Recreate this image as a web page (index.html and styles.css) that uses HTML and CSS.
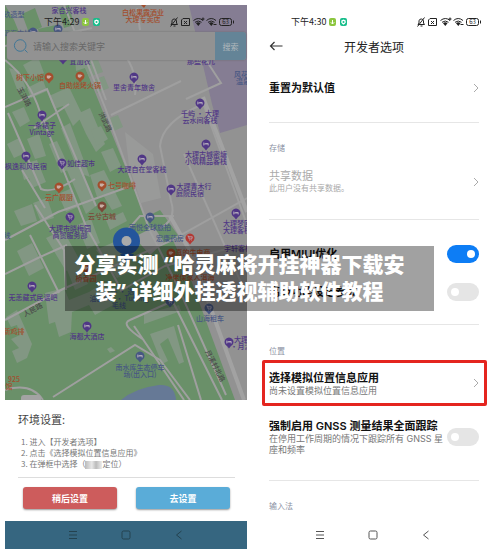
FILE: index.html
```html
<!DOCTYPE html>
<html lang="zh-CN">
<head>
<meta charset="utf-8">
<meta name="viewport" content="width=device-width, initial-scale=1">
<title>开发者选项</title>
<link rel="stylesheet" href="styles.css">
</head>
<body>
<svg class="defs" aria-hidden="true">
  <symbol id="status" viewBox="0 0 66 12">
    <g fill="none" stroke="currentColor" stroke-width="1">
      <path d="M2 8.500h6.500L7.500 7V4.800a2.300 2.300 0 0 0-4.500 0V7zM4.500 10h2M8.500 1.500L1.500 10.500"/>
      <path d="M14 2.500h6.500v7h-8V4zM15 5l3 3M18 5l-3 3"/>
      <path d="M24.500 4.500q5-4 9.500 0M26 6.300q3.300-2.600 6.500 0M34 1.500v3M32.500 3h3"/>
      <path d="M37.500 4.500q4.700-4 9.500 0M39 6.300q3.200-2.600 6.500 0M44.500 8.500h3"/>
      <rect x="50.500" y="2.500" width="12" height="7" rx="2"/>
      <path d="M64.500 4.500v3"/>
    </g>
    <path d="M27 7.200q2.200-1.800 4.500 0L29.300 10zM40 7.200q2.200-1.800 4.500 0L42.300 10z" fill="currentColor"/>
    <text x="56.500" y="8.200" font-size="6" text-anchor="middle" fill="currentColor">63</text>
  </symbol>
  <symbol id="badges" viewBox="0 0 19 8">
    <rect width="7" height="8" rx="2" fill="#8cc63f"/>
    <path d="M3.500 2v4M1.800 4.300l1.700 1.700 1.700-1.700" fill="none" stroke="#fff"/>
    <rect x="11" width="7" height="8" rx="2" fill="#17bd8b"/>
    <path d="M14.500 1.500l2.200 1v2q-.5 1.600-2.200 2.200-1.700-.6-2.200-2.200v-2z" fill="#fff"/>
    <circle cx="14.500" cy="4" r="1" fill="#17bd8b"/>
  </symbol>
  <symbol id="menu" viewBox="0 0 10 10"><path d="M1 1.500h8M1 5h8M1 8.500h8" fill="none" stroke="currentColor"/></symbol>
  <symbol id="home" viewBox="0 0 10 10"><rect x="1" y="1" width="8" height="8" rx="1.500" fill="none" stroke="currentColor"/></symbol>
  <symbol id="back" viewBox="0 0 10 10"><path d="M7.500 1L2.500 5l5 4" fill="none" stroke="currentColor"/></symbol>
  <symbol id="next" viewBox="0 0 6 10"><path d="M1 1l4 4-4 4" fill="none" stroke="currentColor"/></symbol>
  <symbol id="pin" viewBox="-5 -5 10 12" overflow="visible">
    <path d="M0 6.500L-2 4A4.500 4.500 0 1 1 2 4z" fill="currentColor"/>
    <path d="M-2.200 1.500v-3M-2.200 0h4.400M2.200 1.500v-2h-3" fill="none" stroke="#b5aebc" stroke-width=".9"/>
  </symbol>
  <symbol id="cart" viewBox="-5 -5 10 12" overflow="visible">
    <path d="M0 6.500L-2 4A4.500 4.500 0 1 1 2 4z" fill="currentColor"/>
    <path d="M-2.500-2h1l.7 3h2.500l.6-2.200h-3.500M-.6 2.200h.6M1.300 2.200h.6" fill="none" stroke="#b5aebc" stroke-width=".8"/>
  </symbol>
  <symbol id="cup" viewBox="-5 -5 10 12" overflow="visible">
    <path d="M0 6.500L-2 4A4.500 4.500 0 1 1 2 4z" fill="currentColor"/>
    <path d="M-2.200-1.500h3.400v2.200q-1.700 2-3.400 0zM1.200-1h1v1.300h-1" fill="#c9aea3"/>
  </symbol>
</svg>

<main class="screens">
  <section class="phone phone-map">
    <div class="map-stack">
      <svg class="map" viewBox="5 5 242 395" preserveAspectRatio="xMidYMin slice" role="img" aria-label="地图">
        <rect x="5" y="5" width="242" height="395" fill="#929292"/>
        <path d="M189 5h58v120l-27 8-8-29z" fill="#857d93"/>
        <path d="M5 5h67l8 50 72 178 14-8 25 55 44 120H5z" fill="#6a9069"/>
        <path d="M5 5h70l8 25-60 12-9-22z" fill="#8e9390"/>
        <path d="M22 14l13-6 7 19-13 6zM38 29l18-4 4 10-19 6zM58 8l11-3 5 20-10 3z" fill="#6a9069"/>
        <path d="M132 224l28-14 20 28-33 10z" fill="#6a9069"/>
        <g fill="#829783">
          <path d="M23 65l15-8 6 16-13 6zM9 68l9 24 8-4-7-17zM27 88l16-8 4 11-16 7zM49 96l20-9 14 29-10 10-10-20-9 3zM75 58l20-6 8 20-14 5-4-9-9 3zM93 80l11-4 5 12-12 5zM77 114l13-6 15 36-9 8-10-18zM61 128l9-5 20 54-11-4z"/>
          <path d="M12 112l12-5 6 14-10 6zM7 144l12-6 6 15-11 5zM27 139l12-5 7 22-11 3zM49 144l8-3 13 28-9 4zM20 165l17-5 9 22-14 6-3-10-5 2zM66 168l14-2 16 40-10 8zM90 175l14-5 18 36-10 4-9-15-6 2zM101 152l12-4 8 18-11 6zM110 118l8-3 5 12-9 4zM91 130l10-4 7 13-11 7z"/>
          <path d="M33 203l14-5 7 20-13 4zM58 194l12-5 8 18-12 5zM14 211l18-7 5 17-16 5zM77 225l14-6 9 24-13 6zM106 220l17-8 4 9-17 9zM17 251l15-8 12 25-15 8zM46 238l17-8 19 34-16 7zM67 270l13-6 8 20-13 6zM96 250l18-8 20 28-17 8z"/>
          <path d="M45 293l19-5 5 12 20-8 14-9 10 22-18 10-6-10-17 7-1 20-12 5-4-15-6 2zM11 339l9-4-3-10-6 2-5-10 11-7 15 34-5 14-10 5-5-12 7-3zM150 334l24-8 10 36-5 2-11-26-8 6 8 17-6 3zM107 349l4-2 4 4-5 2zM144 314l35-9 2 6-37 13z"/>
        </g>
        <path d="M134 237l20-10 10 15-14 13zM125 132l28 22 8 44-20 5-12-37z" fill="#999a99"/>
        <path d="M121 400q14-12 38-15 16-1 17 15z" fill="#667996"/>
        <g class="road">
          <path d="M5 46L92 28M5 60q25 20 35 52l46 114 36 65M5 107l42-18 49 117M8 113l33 76q12 5 34-10M22 170l23 38M34 128l35-24M5 240l53-28 70-25"/>
          <path d="M64 5l42 105 44 121 28 56 48 108M80 30l26 70M111 115l70-34M120 291l45-25 65-18M5 320l58-31 107-48 77-43M53 397l82-52 25 15 30 40"/>
          <path d="M5 274l35-17 27-12M30 235l29 58M35 205l29 45 2 40M144 340q-25-16-14-20l45-20M134 326l50 74M178 325l23 75M172 300l50 100"/>
          <path d="M120 50q18 18 15 45M201 105q-39 17-41 41l11 55q6 19-11 27M203 103l43 119M184 154l63 142M5 390q26-8 38 10M137 8l3 22M193 40l28 43-35 16M174 216h-34l-15 17"/>
        </g>
        <path d="M170 216l20 35 54 149M203 97l44 115" fill="none" stroke="#a2a2a2" stroke-width="4"/>
        <path d="M21 400v-2q0-3 3-3h14q3 0 3 3v2z" fill="#a3a3a3"/>

        <g class="poi purple">
          <use href="#pin" x="37" y="110" width="10" height="12"/><use href="#pin" x="21" y="151" width="10" height="12"/>
          <use href="#cart" x="57" y="158" width="10" height="12"/><use href="#cart" x="65" y="212" width="10" height="12"/>
          <use href="#pin" x="129" y="72" width="10" height="12"/><use href="#pin" x="195" y="98" width="10" height="12"/>
          <use href="#pin" x="201" y="139" width="10" height="12"/><use href="#pin" x="137" y="154" width="10" height="12"/>
          <use href="#pin" x="166" y="184" width="10" height="12"/><use href="#pin" x="231" y="208" width="10" height="12"/>
          <use href="#pin" x="27" y="281" width="10" height="12"/><use href="#pin" x="82" y="321" width="10" height="12"/>
          <use href="#pin" x="224" y="337" width="10" height="12"/><use href="#pin" x="58" y="53" width="10" height="12"/>
          <text x="69" y="13">家合兴客栈</text><text x="80" y="64">宜加衣</text><text x="201" y="64">那些花儿</text>
          <text x="134" y="90">里舍青年旅舍</text><text x="42" y="128">一条裙子</text><text x="42" y="135">Vintage</text>
          <text x="26" y="169">枫逸和风民宿</text><text x="81" y="166">如佳超市</text>
          <text x="200" y="116">千屿 · 大理</text><text x="200" y="123">云水间客栈</text>
          <text x="206" y="157">大理古城密塘</text><text x="206" y="164">小筑精品客栈</text><text x="142" y="172">大理自在堂客栈</text>
          <text x="194" y="189">大理青木行</text><text x="190" y="196">庭院民宿</text><text x="237" y="226">大理梦回</text><text x="237" y="233">大理客栈</text><text x="238" y="251">宇轩客栈</text>
          <text x="70" y="231">大理市晓梅园</text><text x="70" y="238">商贸服务部</text><text x="33" y="300">无恙藏式民谣吧</text><text x="87" y="339">海都大酒店</text>
          <text x="241" y="342">大理</text><text x="241" y="349">·月溪</text>
        </g>
        <g class="poi orange">
          <use href="#cup" x="44" y="72" width="10" height="12"/><use href="#cup" x="75" y="71" width="10" height="12"/>
          <use href="#cup" x="54" y="182" width="10" height="12"/><use href="#cup" x="97" y="180" width="10" height="12"/>
          <use href="#cup" x="166" y="248" width="10" height="12"/><use href="#cup" x="81" y="263" width="10" height="12"/>
          <path d="M141 5h5l-2 3z" fill="currentColor"/>
          <text x="143" y="15">白松果露酒业</text><text x="143" y="22">大理专卖店</text>
          <text x="30" y="80">树下小馆</text><text x="80" y="88">自助烧烤火锅</text><text x="59" y="200">云广靓厨</text><text x="122" y="188">七号咖啡</text>
          <text x="193" y="255">真的牛电商</text><text x="86" y="281">桥香园</text><text x="190" y="280">净佬倮家人洱海</text><text x="14" y="334">新鸡排</text>
          <text x="14" y="382">925</text><text x="9" y="389">馆</text>
        </g>
        <g class="poi brown"><use href="#cup" x="97" y="201" width="10" height="12"/><text x="102" y="219">云兮古城</text></g>
        <g class="poi blue">
          <use href="#pin" x="145" y="212" width="10" height="12"/><use href="#pin" x="28" y="27" width="10" height="12"/><use href="#pin" x="53" y="24" width="10" height="12"/>
          <use href="#cart" x="204" y="303" width="10" height="12"/><use href="#cart" x="165" y="296" width="10" height="12"/><use href="#pin" x="135" y="351" width="10" height="12"/>
          <text x="150" y="230">雨悦全球旅拍</text><text x="210" y="321">山海租车</text>
          <text x="119" y="294">手作 · 选</text><text x="119" y="301">油画DIY · Tufting</text><text x="119" y="308">毛线</text>
          <text x="140" y="370">南水库生态停车</text><text x="140" y="377">场(出入口)</text>
          <text x="14" y="17">玖造型</text><text x="17" y="36">洱海古栈</text><text x="241" y="77">风花</text><text x="243" y="84">温泉</text><text x="7" y="238">线</text>
        </g>
        <g class="poi red"><use href="#cart" x="185" y="233" width="10" height="12"/><text class="plain" x="170" y="241">宏康药房</text></g>
        <g class="poi street">
          <text transform="translate(22 98) rotate(62)">玉洱路</text><text transform="translate(103 123) rotate(65)">洪武路</text>
          <text transform="translate(34 312) rotate(-28)">人民路</text><text transform="translate(213 367) rotate(63)">月溪村北路</text>
        </g>
        <path d="M127 264l-7-10h14z" fill="#24559c"/>
        <circle cx="126.500" cy="241" r="13.500" fill="#24559c"/><circle cx="126.500" cy="241" r="5" fill="#aaa"/>
      </svg>
      <div class="map-header">
        <div class="status"><span class="clock">下午4:29 <svg class="badges"><use href="#badges"/></svg></span><svg class="signals"><use href="#status"/></svg></div>
        <form class="search">
          <svg class="glass" viewBox="0 0 16 16" aria-hidden="true"><path d="M12 12l2.500 2.500M13 7.500a5.800 5.800 0 1 1-11.600 0 5.800 5.800 0 0 1 11.600 0z" fill="none" stroke="#417797"/></svg>
          <input type="text" aria-label="搜索关键字" placeholder="请输入搜索关键字">
          <button type="button">搜索</button>
        </form>
      </div>
    </div>
    <div class="sheet">
      <h2>环境设置:</h2>
      <ol>
        <li>进入【开发者选项】</li>
        <li>点击《选择模拟位置信息应用》</li>
        <li>在弹框中选择（<span class="masked" aria-hidden="true"></span>定位）</li>
      </ol>
      <div class="actions">
        <button type="button" class="later">稍后设置</button>
        <button type="button" class="go">去设置</button>
      </div>
    </div>
    <nav class="navbar dark">
      <button type="button" aria-label="菜单"><svg><use href="#menu"/></svg></button>
      <button type="button" aria-label="主页"><svg><use href="#home"/></svg></button>
      <button type="button" aria-label="返回"><svg><use href="#back"/></svg></button>
    </nav>
  </section>

  <section class="phone phone-settings">
    <div class="status"><span class="clock">下午4:30 <svg class="badges"><use href="#badges"/></svg></span><svg class="signals"><use href="#status"/></svg></div>
    <header class="titlebar">
      <button type="button" aria-label="返回"><svg viewBox="0 0 14 10"><path d="M13.500 5H1.500M5.500 1l-4 4 4 4" fill="none" stroke="#333" stroke-width="1.200"/></svg></button>
      <h1>开发者选项</h1>
    </header>
    <div class="group first">
      <a class="row" href="#reset"><span class="name">重置为默认值</span><svg class="chevron"><use href="#next"/></svg></a>
    </div>
    <div class="group storage">
      <h2>存储</h2>
      <a class="row disabled" href="#share"><span><span class="name">共享数据</span><small>此用户没有共享数据。</small></span><svg class="chevron"><use href="#next"/></svg></a>
    </div>
    <div class="group toggles">
      <label class="row"><span class="name">启用MIUI优化</span><input type="checkbox" checked></label>
      <label class="row"><span class="name">高级功能设定参数</span><input type="checkbox"></label>
    </div>
    <div class="group location">
      <h2>位置</h2>
      <a class="row marked" href="#mock"><span><span class="name">选择模拟位置信息应用</span><small>尚未设置模拟位置信息应用</small></span><svg class="chevron"><use href="#next"/></svg></a>
      <label class="row gnss"><span><span class="name">强制启用 GNSS 测量结果全面跟踪</span><small>在停用工作周期的情况下跟踪所有 GNSS 星座和频率</small></span><input type="checkbox"></label>
    </div>
    <div class="group last"><h2>输入法</h2></div>
    <nav class="navbar">
      <button type="button" aria-label="菜单"><svg><use href="#menu"/></svg></button>
      <button type="button" aria-label="主页"><svg><use href="#home"/></svg></button>
      <button type="button" aria-label="返回"><svg><use href="#back"/></svg></button>
    </nav>
  </section>
</main>
<p class="caption">分享实测<span class="quote"> “</span>哈灵麻将开挂神器下载安<br>装<span class="quote">” </span>详细外挂透视辅助软件教程</p>
</body>
</html>
```
FILE: styles.css
```css
* { box-sizing: border-box; }
body {
  margin: 0;
  position: relative;
  background: #fff;
  color: #111;
  font-family: "Noto Sans CJK SC", sans-serif;
  font-size: 8px;
}
h1, h2, p, ol { margin: 0; padding: 0; font-weight: 400; }
button, input { font: inherit; border: 0; padding: 0; margin: 0; }
button { background: none; color: inherit; }
a { color: inherit; text-decoration: none; }
.defs { display: block; width: 0; height: 0; }

.screens {
  display: grid;
  grid-template-columns: 242fr 250fr;
  gap: 3px;
  padding: 5px 0 5px 5px;
}
.phone { display: flex; flex-direction: column; min-width: 0; }

/* Status bar */
.status {
  display: flex;
  align-items: center;
  justify-content: space-between;
  height: 16px;
  padding: 0 12px 0 38px;
  color: #222;
}
.clock { display: flex; align-items: center; gap: 2px; font-size: 9px; line-height: 16px; }
.badges { width: 19px; height: 8px; }
.signals { width: 66px; height: 12px; }

/* Map */
.map-stack { display: grid; }
.map, .map-header { grid-area: 1 / 1; }
.map { display: block; width: 100%; aspect-ratio: 242 / 395; }
.map-header { z-index: 1; align-self: start; padding: 9px 1px 0 2px; }
.map-header .status { padding: 0 11px 0 37px; }
.road path { fill: none; stroke: #9f9f9f; stroke-width: 2px; }
.poi { font-size: 7px; font-weight: 500; text-anchor: middle; }
.poi text { fill: currentColor; }
.purple { color: #503786; }
.orange { color: #a34e2d; }
.brown { color: #7c4737; }
.blue { color: #475783; }
.red { color: #b23933; }
.red .plain { fill: #475783; }
.street { color: #4c4c4c; }

.search {
  display: flex;
  align-items: center;
  height: 28px;
  margin-top: 2px;
  border-radius: 3px;
  overflow: hidden;
  background: #929292;
  box-shadow: 0 0 2px #666;
}
.glass { flex: none; width: 16px; height: 16px; margin: 0 4px 0 6px; }
.search input { flex: 1; min-width: 0; background: none; font-size: 9px; }
.search input::placeholder { color: #686868; opacity: 1; }
.search button { width: 31px; height: 28px; background: #648497; color: #b1b8bc; }

/* Bottom sheet */
.sheet { height: 121px; padding: 11px 12px 0 13px; }
.sheet h2 { font-size: 11px; line-height: 16px; color: #444; }
.sheet ol {
  margin-top: 9px;
  padding: 0 0 8px 3px;
  border-bottom: 1px solid #ddd;
  list-style: none;
  counter-reset: step;
  font-size: 8px;
  line-height: 11px;
  color: #777;
}
.sheet li { counter-increment: step; height: 11px; }
.sheet li::before { content: counter(step) ". "; }
.masked { display: inline-block; width: 17px; height: 8px; vertical-align: middle; background: linear-gradient(90deg, #bbb, #e8e8e8 40%, #bbb 65%, #eee); }
.actions { display: grid; grid-template-columns: 1fr 1fr; gap: 19px; padding: 9px 5px; }
.actions button { height: 22px; border-radius: 3px; color: #fff; font-weight: 700; font-size: 9px; box-shadow: 0 1px 2px #999; }
.later { background: #cd5c5c; }
.go { background: #5aacd8; }

.navbar { display: flex; justify-content: center; gap: 43px; height: 28px; align-items: center; color: #555; }
.navbar button { display: flex; width: 10px; height: 10px; }
.navbar svg { width: 10px; height: 10px; }
.navbar.dark { background: #366680; color: #24424f; }
.phone-settings .navbar { padding-right: 4px; }

/* Settings */
.titlebar { display: grid; grid-template-columns: 14px 1fr 14px; align-items: center; height: 32px; padding: 0 21px 0 19px; }
.titlebar button { display: flex; }
.titlebar svg { width: 14px; height: 10px; }
.titlebar h1 { font-size: 12px; text-align: center; color: #222; }
.phone-settings .status { margin-top: 9px; padding: 0 18px 0 41px; }
.group { margin: 0 21px 0 19px; border-bottom: 1px solid #e6e6e6; }
.group h2 { font-size: 8px; line-height: 12px; color: #8b91a3; }
.row { display: flex; align-items: center; justify-content: space-between; font-family: Inter, "Noto Sans CJK SC", sans-serif; }
.name { display: block; font-size: 11px; line-height: 14px; font-weight: 600; white-space: nowrap; }
.row small { display: block; font-size: 9px; line-height: 11px; color: #777; }
.chevron { flex: none; width: 6px; height: 10px; color: #aaa; }
.first { height: 61px; padding-top: 15px; }
.first .row { height: 22px; }
.storage { height: 97px; padding-top: 19px; }
.disabled { margin-top: 15px; }
.disabled .name, .disabled small { color: #aaa; font-weight: 400; }
.row.disabled small { font-size: 8px; }
.toggles { height: 105px; padding-top: 15px; }
.toggles .row { height: 38px; }
.location { height: 156px; padding-top: 20px; }
.marked { height: 46px; margin: 3px -8px 0 -7px; padding: 0 5px 0 4px; border: 3px solid #e4251f; border-radius: 2px; }
.gnss { margin-top: 13px; }
.gnss > span { width: 177px; }
.last { height: 40px; padding-top: 19px; border: 0; }

input[type="checkbox"] {
  appearance: none;
  flex: none;
  display: flex;
  align-items: center;
  width: 32px;
  height: 18px;
  padding: 0 4px;
  border-radius: 9px;
  background: #e5e5e5;
}
input[type="checkbox"]::before { content: ""; width: 8px; height: 8px; border-radius: 50%; background: #fff; }
input[type="checkbox"]:checked { justify-content: flex-end; background: #0d7df5; }

/* Caption across both screens */
.caption {
  position: absolute;
  top: 246px;
  left: 13%;
  right: 13.2%;
  z-index: 2;
  padding: 4px 20px 7px 0;
  background: rgb(0 0 0 / 37%);
  color: #fff;
  font-size: 21px;
  line-height: 26px;
  font-weight: 900;
  text-align: center;
  white-space: nowrap;
}
.quote { font-family: "Noto Sans", sans-serif; font-weight: 700; }
```
